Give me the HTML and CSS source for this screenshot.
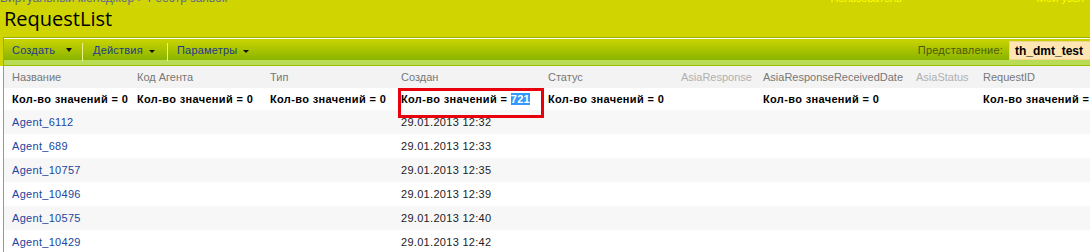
FILE: index.html
```html
<!DOCTYPE html>
<html lang="ru">
<head>
    <meta charset="UTF-8">
    <title>RequestList</title>
    <link rel="stylesheet" href="styles.css">
</head>
<body>
    <div class="masthead">
        <div class="crumbs">
            <span class="crumb-path">Виртуальный менеджер &gt; Реестр заявок</span>
            <span class="welcome">Пользователь</span>
            <span class="welcome">Мой узел</span>
        </div>
        <h1 class="page-title">RequestList</h1>
    </div>

    <div class="chrome">
        <div class="toolbar">
            <div class="tb-item tb-create">Создать<i class="tb-arrow big"></i></div>
            <div class="tb-item tb-actions">Действия<i class="tb-arrow"></i></div>
            <div class="tb-item tb-params">Параметры<i class="tb-arrow"></i></div>
            <div class="view-label">Представление:</div>
            <div class="view-box">th_dmt_test</div>
        </div>
    </div>

    <div class="list-area">
        <table class="grid">
            <colgroup>
                <col style="width:125px"><col style="width:133px"><col style="width:131px">
                <col style="width:147px"><col style="width:133px"><col style="width:82px">
                <col style="width:153px"><col style="width:67px"><col style="width:130px">
            </colgroup>
            <tr class="head-row">
                <th>Название</th>
                <th>Код Агента</th>
                <th>Тип</th>
                <th>Создан</th>
                <th>Статус</th>
                <th class="dim">AsiaResponse</th>
                <th>AsiaResponseReceivedDate</th>
                <th class="dim">AsiaStatus</th>
                <th>RequestID</th>
            </tr>
            <tr class="total-row">
                <td>Кол-во значений = 0</td>
                <td>Кол-во значений = 0</td>
                <td>Кол-во значений = 0</td>
                <td>Кол-во значений = <span class="selected">721</span></td>
                <td>Кол-во значений = 0</td>
                <td></td>
                <td>Кол-во значений = 0</td>
                <td></td>
                <td>Кол-во значений = 0</td>
            </tr>
            <tr class="data-row">
                <td><a href="#">Agent_6112</a></td><td></td><td></td><td>29.01.2013 12:32</td><td></td><td></td><td></td><td></td><td></td>
            </tr>
            <tr class="data-row">
                <td><a href="#">Agent_689</a></td><td></td><td></td><td>29.01.2013 12:33</td><td></td><td></td><td></td><td></td><td></td>
            </tr>
            <tr class="data-row">
                <td><a href="#">Agent_10757</a></td><td></td><td></td><td>29.01.2013 12:35</td><td></td><td></td><td></td><td></td><td></td>
            </tr>
            <tr class="data-row">
                <td><a href="#">Agent_10496</a></td><td></td><td></td><td>29.01.2013 12:39</td><td></td><td></td><td></td><td></td><td></td>
            </tr>
            <tr class="data-row">
                <td><a href="#">Agent_10575</a></td><td></td><td></td><td>29.01.2013 12:40</td><td></td><td></td><td></td><td></td><td></td>
            </tr>
            <tr class="data-row">
                <td><a href="#">Agent_10429</a></td><td></td><td></td><td>29.01.2013 12:42</td><td></td><td></td><td></td><td></td><td></td>
            </tr>
        </table>
        <div class="mark-box"></div>
    </div>
</body>
</html>
```

FILE: styles.css
```css
* {
    margin: 0;
    padding: 0;
    box-sizing: border-box;
}

body {
    background: #fff;
    font-family: 'Liberation Sans', Arial, sans-serif;
    font-size: 11px;
    overflow: hidden;
}

/* верхняя жёлтая шапка */
.masthead {
    background: #d0d400;
    height: 37px;
    overflow: hidden;
}

.crumbs {
    display: flex;
    margin-top: -8px;
    font-size: 12px;
    line-height: 12px;
    color: #5b6b8f;
}

.crumb-path {
    flex: 1;
}

.welcome {
    color: #ffff00;
    font-size: 11px;
    margin-right: 135px;
}

.welcome + .welcome {
    margin-right: 6px;
}

.page-title {
    margin: 3px 0 0 4px;
    font-family: 'Open Sans', 'Liberation Sans', sans-serif;
    font-size: 20px;
    line-height: 24px;
    font-weight: normal;
    color: #000;
}

/* панель инструментов */
.chrome {
    background: #d0d400;
}

.toolbar {
    margin-left: 3px;
    height: 29px;
    border-top: 1px solid #9eae00;
    border-left: 1px solid #97b400;
    display: flex;
    align-items: flex-start;
    overflow: hidden;
    background: linear-gradient(to bottom,
        #fff 0, #fff 1px,
        #cad400 1px, #8ab400 22px,
        #b8dc55 22px, #b8dc55 27px,
        #9fbc00 27px);
}

.tb-item {
    position: relative;
    height: 22px;
    margin-top: 1px;
    padding-top: 5px;
    color: #1e3a8c;
    line-height: 13px;
    letter-spacing: 0.2px;
    display: flex;
    align-items: flex-start;
}

.tb-create {
    width: 79px;
    padding-left: 8px;
}

.tb-actions {
    width: 85px;
    padding-left: 10px;
}

.tb-params {
    width: 90px;
    padding-left: 9px;
}

.tb-create::after,
.tb-actions::after {
    content: '';
    position: absolute;
    right: 0;
    top: 4px;
    width: 1px;
    height: 18px;
    background: #eef08a;
}

.tb-arrow {
    width: 0;
    height: 0;
    margin: 6px 0 0 6px;
    border-left: 3px solid transparent;
    border-right: 3px solid transparent;
    border-top: 3px solid #111;
}

.tb-arrow.big {
    margin: 4px 0 0 11px;
    border-left-width: 3.5px;
    border-right-width: 3.5px;
    border-top-width: 4px;
}

.view-label {
    margin: 6px 6px 0 auto;
    color: #4c5a0c;
    font-size: 11px;
    line-height: 13px;
    letter-spacing: 0.2px;
}

.view-box {
    width: 81px;
    height: 19px;
    margin-top: 3px;
    padding: 2px 0 0 5px;
    background: #fde5b4;
    border: 1px solid #f3d48e;
    border-right: none;
    font-size: 12px;
    font-weight: bold;
    line-height: 14px;
    color: #000;
}

/* список */
.list-area {
    position: relative;
    margin-left: 3px;
    border-left: 1px solid #97b400;
    overflow: hidden;
    height: 186px;
}

.grid {
    table-layout: fixed;
    border-collapse: collapse;
    width: 1101px;
}

.grid th,
.grid td {
    padding: 0 0 0 8px;
    text-align: left;
    white-space: nowrap;
    overflow: hidden;
}

.head-row th {
    height: 22px;
    background: #f3f3f3;
    color: #777;
    font-weight: normal;
}

.head-row th.dim {
    color: #b0b0b0;
}

.total-row td {
    height: 22px;
    font-weight: bold;
    letter-spacing: 0.35px;
    color: #000;
}

.data-row td {
    height: 24px;
    letter-spacing: 0.3px;
    color: #222;
}

.data-row:nth-child(odd) td {
    background: #f7f7f7;
}

.data-row a {
    color: #21469c;
    text-decoration: none;
}

.selected {
    background: #3399ff;
    color: #fff;
}

.mark-box {
    position: absolute;
    left: 394px;
    top: 22px;
    width: 146px;
    height: 30px;
    border: 3px solid #e8000c;
}
```
